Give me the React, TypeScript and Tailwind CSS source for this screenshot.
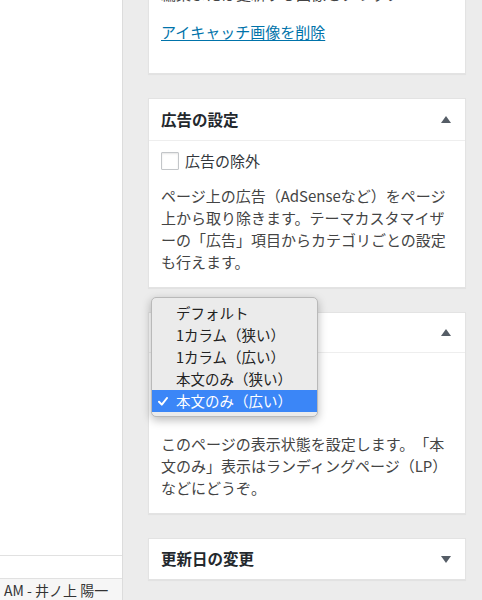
import React from "react";

const FONT = { fontFamily: '"Noto Sans CJK JP", "Noto Sans", sans-serif' };

function Tri({ up }: { up: boolean }) {
  return (
    <svg width="10" height="7" viewBox="0 0 10 7" className="block">
      {up ? <path d="M5 0 L10 7 L0 7 Z" fill="#555d66" /> : <path d="M0 0 L10 0 L5 7 Z" fill="#555d66" />}
    </svg>
  );
}

function Lines({ lines }: { lines: string[] }) {
  return (
    <div>
      {lines.map((l) => (
        <div key={l} className="whitespace-nowrap">
          {l}
        </div>
      ))}
    </div>
  );
}

export default function App() {
  const items = ["デフォルト", "1カラム（狭い）", "1カラム（広い）", "本文のみ（狭い）", "本文のみ（広い）"];
  return (
    <div
      className="relative w-[482px] h-[600px] overflow-hidden flex bg-[#ececec] text-[#444] [text-spacing-trim:space-all]"
      style={FONT}
    >
      {/* left panel */}
      <div className="w-[123px] shrink-0 h-full bg-white border-r border-[#dcdcdc] flex flex-col justify-end">
        <div className="h-[23px] border-t border-[#e1e1e1]" />
        <div className="h-[22px] border-t border-[#e1e1e1] bg-[#f6f6f6] pl-[4px] text-[14px] leading-[22px] text-[#333] whitespace-nowrap">
          AM - 井ノ上&nbsp;陽一
        </div>
      </div>

      {/* right column */}
      <div className="ml-[25px] w-[318px] flex flex-col gap-[24px]">
        {/* card 1 */}
        <div className="-mt-[30px] bg-white border border-[#e3e3e3] shadow-[0_1px_1px_rgba(0,0,0,0.04)] px-[12px] pt-[12px] pb-[30px] text-[15px] leading-[22px]">
          <p className="whitespace-nowrap">編集または更新する画像をクリック</p>
          <p className="mt-[16px]">
            <a className="text-[#0073aa] underline underline-offset-2">アイキャッチ画像を削除</a>
          </p>
        </div>

        {/* card 2 */}
        <div className="bg-white border border-[#e3e3e3] shadow-[0_1px_1px_rgba(0,0,0,0.04)]">
          <div className="h-[42px] border-b border-[#eeeeee] flex items-center justify-between pl-[12px] pr-[14px]">
            <span className="text-[15.5px] font-bold text-[#23282d]">広告の設定</span>
            <Tri up />
          </div>
          <div className="px-[12px] pt-[11px] pb-[14px] text-[15px] leading-[22px]">
            <div className="flex items-center gap-[6px] h-[18px]">
              <span className="w-[18px] h-[18px] border border-[#c3c6c9] bg-white shadow-[inset_0_1px_2px_rgba(0,0,0,0.1)] rounded-[1px]" />
              <span className="text-[#32373c]">広告の除外</span>
            </div>
            <div className="mt-[15px]">
              <Lines
                lines={[
                  "ページ上の広告（AdSenseなど）をページ",
                  "上から取り除きます。テーマカスタマイザ",
                  "ーの「広告」項目からカテゴリごとの設定",
                  "も行えます。",
                ]}
              />
            </div>
          </div>
        </div>

        {/* card 3 */}
        <div className="bg-white border border-[#e3e3e3] shadow-[0_1px_1px_rgba(0,0,0,0.04)]">
          <div className="h-[40px] border-b border-[#eeeeee] flex items-center justify-between pl-[12px] pr-[14px]">
            <span className="text-[15.5px] font-bold text-[#23282d]">ページ表示</span>
            <Tri up />
          </div>
          <div className="px-[12px] pt-[12px] pb-[14px] text-[15px] leading-[22px]">
            <div className="h-[68px]" />
            <Lines
              lines={[
                "このページの表示状態を設定します。「本",
                "文のみ」表示はランディングページ（LP）",
                "などにどうぞ。",
              ]}
            />
          </div>
        </div>

        {/* card 4 */}
        <div className="bg-white border border-[#e3e3e3] shadow-[0_1px_1px_rgba(0,0,0,0.04)]">
          <div className="h-[40px] flex items-center justify-between pl-[12px] pr-[14px]">
            <span className="text-[15.5px] font-bold text-[#23282d]">更新日の変更</span>
            <Tri up={false} />
          </div>
        </div>
      </div>

      {/* native dropdown popup */}
      <div className="absolute left-[151px] top-[297px] w-[167px] py-[4px] bg-[#ebebeb] border border-[#b9b9b9] rounded-[5px] shadow-[0_3px_10px_rgba(0,0,0,0.28)] text-[14.5px] text-[#222]">
        {items.map((t, i) => {
          const sel = i === items.length - 1;
          return (
            <div
              key={t}
              className={
                "h-[22px] flex items-center whitespace-nowrap " +
                (sel ? "bg-[#3b86f7] text-white" : "")
              }
            >
              <span className="w-[24px] pl-[6px] flex items-center">
                {sel ? (
                  <svg width="10" height="9" viewBox="0 0 10 9">
                    <path d="M1 4.8 L3.8 7.6 L9 1" fill="none" stroke="white" strokeWidth="2" strokeLinecap="round" strokeLinejoin="round" />
                  </svg>
                ) : null}
              </span>
              <span>{t}</span>
            </div>
          );
        })}
      </div>
    </div>
  );
}
